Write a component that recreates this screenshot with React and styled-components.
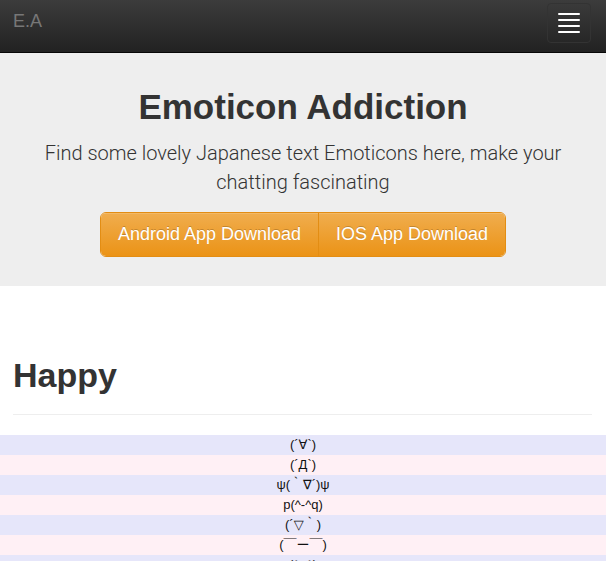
import React from "react";
import styled, { createGlobalStyle } from "styled-components";

const GlobalStyle = createGlobalStyle`
  html, body {
    margin: 0;
    padding: 0;
    background: #fff;
  }
  body {
    font-family: "Liberation Sans", Arial, "DejaVu Sans", "Noto Sans CJK JP", sans-serif;
    color: #333;
    font-size: 14px;
    line-height: 1.42857;
  }
  * {
    box-sizing: border-box;
  }
`;

const Navbar = styled.nav`
  display: flex;
  align-items: center;
  justify-content: space-between;
  height: 53px;
  padding: 0 15px 0 13px;
  background: linear-gradient(to bottom, #3c3c3c 0%, #222 100%);
  border-bottom: 1px solid #080808;
`;

const Brand = styled.a`
  color: #777;
  font-size: 18px;
  line-height: 20px;
  text-decoration: none;
  margin-top: -10px;
`;

const Toggle = styled.button`
  display: flex;
  flex-direction: column;
  justify-content: center;
  gap: 4px;
  width: 44px;
  height: 40px;
  padding: 0 10px;
  margin-top: -7px;
  background: transparent;
  border: 1px solid #333;
  border-radius: 4px;
`;

const IconBar = styled.span`
  display: block;
  width: 22px;
  height: 2px;
  background: #fff;
  border-radius: 1px;
`;

const Jumbotron = styled.header`
  background: #eee;
  padding: 35px 15px 29px;
  text-align: center;
`;

const Title = styled.h1`
  margin: 0;
  font-size: 35px;
  font-weight: 700;
  line-height: 1.1;
  color: #333;
`;

const Lead = styled.p`
  margin: 12px auto 15px;
  max-width: 560px;
  font-family: Roboto, "Liberation Sans", sans-serif;
  font-size: 20px;
  font-weight: 300;
  line-height: 29px;
  color: #333;
`;

const ButtonGroup = styled.div`
  display: inline-flex;
  border-radius: 6px;
  overflow: hidden;
  border: 1px solid #e38d13;
`;

const Button = styled.a`
  display: block;
  padding: 10px 17px;
  font-size: 18px;
  line-height: 1.3333;
  color: #fff;
  text-decoration: none;
  background: linear-gradient(to bottom, #f0ad4e 0%, #eb9316 100%);
  text-shadow: 0 -1px 0 rgba(0, 0, 0, 0.2);
  box-shadow: inset 0 1px 0 rgba(255, 255, 255, 0.15);
  & + & {
    border-left: 1px solid #e38d13;
  }
`;

const Section = styled.section`
  padding: 69px 14px 0 13px;
`;

const SectionTitle = styled.h1`
  margin: 0;
  font-size: 34px;
  font-weight: 700;
  line-height: 40px;
  color: #333;
`;

const Rule = styled.hr`
  margin: 19px 0 20px;
  border: 0;
  border-top: 1px solid #eee;
`;

const List = styled.ul`
  list-style: none;
  margin: 0;
  padding: 0;
`;

const Item = styled.li`
  height: 20px;
  line-height: 20px;
  font-size: 13px;
  text-align: center;
  color: #111;
  background: ${(p) => (p.odd ? "#fff0f5" : "#e6e6fa")};
`;

const emoticons = [
  "(´∀`)",
  "(´Д`)",
  "ψ(｀∇´)ψ",
  "p(^-^q)",
  "(´▽｀)",
  "(￣ー￣)",
  "(^_^)",
  "(≧∇≦)",
];

export default function App() {
  return (
    <>
      <GlobalStyle />
      <Navbar>
        <Brand href="#">E.A</Brand>
        <Toggle aria-label="Toggle navigation">
          <IconBar />
          <IconBar />
          <IconBar />
          <IconBar />
        </Toggle>
      </Navbar>
      <Jumbotron>
        <Title>Emoticon Addiction</Title>
        <Lead>
          Find some lovely Japanese text Emoticons here, make your chatting
          fascinating
        </Lead>
        <ButtonGroup>
          <Button href="#">Android App Download</Button>
          <Button href="#">IOS App Download</Button>
        </ButtonGroup>
      </Jumbotron>
      <Section>
        <SectionTitle>Happy</SectionTitle>
        <Rule />
      </Section>
      <List>
        {emoticons.map((e, i) => (
          <Item key={i} odd={i % 2 === 1}>
            {e}
          </Item>
        ))}
      </List>
    </>
  );
}
